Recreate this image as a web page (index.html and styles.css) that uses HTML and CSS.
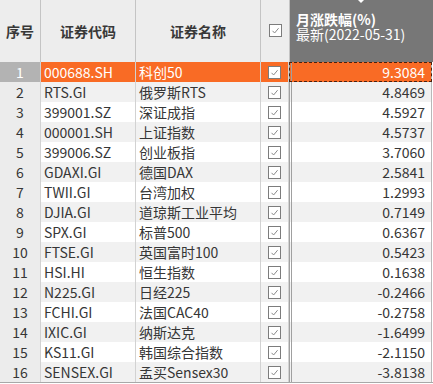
FILE: index.html
```html
<!DOCTYPE html>
<html>

<head>
    <title>月涨跌幅</title>
    <link rel="stylesheet" href="styles.css">
</head>

<body>
    <div class="grid">
        <!-- header -->
        <div class="head">
            <div class="cell seq">序号</div>
            <div class="cell code">证券代码</div>
            <div class="cell name">证券名称</div>
            <div class="cell check"><span class="box"><svg viewBox="0 0 13 13"><rect x="0.5" y="0.5" width="12" height="12"/><polyline points="3.5,6.8 5.6,9 9.6,4.2"/></svg></span></div>
            <div class="cell value_head">
                <span class="sort"></span>
                <b>月涨跌幅(%)</b>
                <span>最新(2022-05-31)</span>
            </div>
        </div>
        <!-- rows -->
        <div id="rows"></div>
    </div>
    <script src="script.js"></script>
</body>

</html>
```

FILE: styles.css
```css
* {
    margin: 0;
    padding: 0;
    box-sizing: border-box;
}

body {
    background-color: #ffffff;
    font-family: "Noto Sans CJK SC", "Microsoft YaHei", sans-serif;
    font-size: 14px;
    color: #363636;
}

.grid {
    width: 433px;
    border-bottom: 1px solid #a8a8a8;
}

.head,
.row {
    display: flex;
}

.head {
    height: 62px;
    background-color: #ededed;
    color: #383838;
    font-weight: bold;
}

.row {
    height: 20px;
    line-height: 20px;
}

.cell {
    display: flex;
    align-items: center;
    flex: none;
    white-space: nowrap;
    overflow: hidden;
    border-right: 1px solid #d2d2d2;
}

.seq { width: 41px; justify-content: center; }
.code { width: 95px; padding-left: 3px; }
.name { width: 125px; padding-left: 3px; }
.check { width: 29px; justify-content: center; }
.value { width: 143px; }

.head .code,
.head .name {
    justify-content: center;
    padding-left: 0;
}

.head .cell {
    border-right-color: #c4c4c4;
}

.value_head {
    position: relative;
    width: 143px;
    flex-direction: column;
    align-items: flex-start;
    justify-content: flex-start;
    background-color: #777777;
    color: #ffffff;
    font-weight: normal;
    line-height: 15px;
    padding: 12px 0 0 6px;
    border-right: none;
}

.value_head b {
    font-weight: bold;
}

.sort {
    position: absolute;
    top: 0;
    left: 68px;
    border-left: 3px solid transparent;
    border-right: 3px solid transparent;
    border-top: 3px solid #ffffff;
}

.row:nth-child(even) .cell {
    background-color: #f1f1f1;
}

.row .seq {
    background-color: #ececec !important;
}

.row .value {
    justify-content: flex-end;
    padding-right: 6px;
    border-left: 3px double #a0a0a0;
    border-right: 1px solid #b8b8b8;
}

.row .check {
    width: 28px;
}

.box {
    display: block;
    width: 13px;
    height: 13px;
}

.box svg {
    display: block;
    width: 13px;
    height: 13px;
}

.box rect {
    fill: #ffffff;
    stroke: #7c7c7c;
    stroke-width: 1;
}

.box polyline {
    fill: none;
    stroke: #8a8a8a;
    stroke-width: 1;
}

.head .box {
    margin-top: -1px;
}

.row.selected .cell {
    background-color: #f96b25;
    color: #ffffff;
}

.row.selected .seq {
    background-color: #b3b3b3 !important;
}

.row.selected .value {
    outline: 1px dashed #4a2210;
    outline-offset: -1px;
}
```

FILE: script.js
```js
var data = [
    ["000688.SH", "科创50", "9.3084"],
    ["RTS.GI", "俄罗斯RTS", "4.8469"],
    ["399001.SZ", "深证成指", "4.5927"],
    ["000001.SH", "上证指数", "4.5737"],
    ["399006.SZ", "创业板指", "3.7060"],
    ["GDAXI.GI", "德国DAX", "2.5841"],
    ["TWII.GI", "台湾加权", "1.2993"],
    ["DJIA.GI", "道琼斯工业平均", "0.7149"],
    ["SPX.GI", "标普500", "0.6367"],
    ["FTSE.GI", "英国富时100", "0.5423"],
    ["HSI.HI", "恒生指数", "0.1638"],
    ["N225.GI", "日经225", "-0.2466"],
    ["FCHI.GI", "法国CAC40", "-0.2758"],
    ["IXIC.GI", "纳斯达克", "-1.6499"],
    ["KS11.GI", "韩国综合指数", "-2.1150"],
    ["SENSEX.GI", "孟买Sensex30", "-3.8138"]
];

var box = '<span class="box"><svg viewBox="0 0 13 13"><rect x="0.5" y="0.5" width="12" height="12"/><polyline points="3.5,6.8 5.6,9 9.6,4.2"/></svg></span>';

var html = "";
for (var i = 0; i < data.length; i++) {
    html += '<div class="row' + (i == 0 ? ' selected' : '') + '">' +
        '<div class="cell seq">' + (i + 1) + '</div>' +
        '<div class="cell code">' + data[i][0] + '</div>' +
        '<div class="cell name">' + data[i][1] + '</div>' +
        '<div class="cell check">' + box + '</div>' +
        '<div class="cell value">' + data[i][2] + '</div>' +
        '</div>';
}
document.getElementById("rows").innerHTML = html;
```
